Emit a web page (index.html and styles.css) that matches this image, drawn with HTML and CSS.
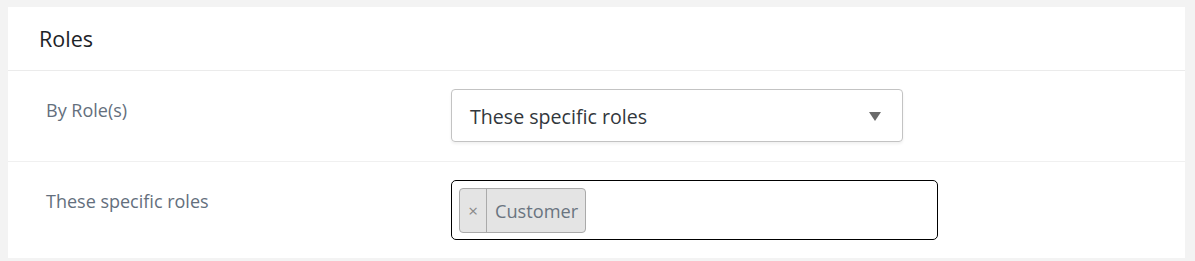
FILE: index.html
```html
<!DOCTYPE html>
<html>
<head>
<meta charset="utf-8">
<link rel="stylesheet" href="styles.css">
</head>
<body>
<div class="card">
  <div class="card-header">Roles</div>
  <div class="row row-select">
    <div class="label">By Role(s)</div>
    <div class="field">
      <div class="select">
        <span class="select-text">These specific roles</span>
        <span class="arrow"></span>
      </div>
    </div>
  </div>
  <div class="row row-multi">
    <div class="label">These specific roles</div>
    <div class="field">
      <div class="multi">
        <span class="tag"><span class="tag-x">×</span><span class="tag-text">Customer</span></span>
      </div>
    </div>
  </div>
</div>
</body>
</html>
```

FILE: styles.css
```css
html, body {
  margin: 0;
  padding: 0;
}
body {
  background: #f3f3f3;
  font-family: "Open Sans", "Noto Sans", sans-serif;
  padding: 7px 10px 3px 8px;
}
.card {
  background: #fff;
}
.card-header {
  height: 64px;
  box-sizing: border-box;
  padding: 0 0 0 31px;
  font-size: 21.5px;
  line-height: 63px;
  color: #1d2327;
  border-bottom: 1px solid #ebebeb;
}
.row {
  display: flex;
  box-sizing: border-box;
}
.row-select {
  height: 91px;
  border-bottom: 1px solid #f0f0f0;
  padding-top: 18px;
}
.row-multi {
  height: 96px;
  padding-top: 18px;
}
.label {
  width: 443px;
  box-sizing: border-box;
  padding-left: 38px;
  padding-top: 9px;
  font-size: 18px;
  color: #646f7d;
}
.select {
  width: 452px;
  height: 53px;
  box-sizing: border-box;
  border: 1px solid #c3c3c3;
  border-radius: 4px;
  box-shadow: 0 2px 3px rgba(0,0,0,0.06);
  display: flex;
  align-items: center;
  justify-content: space-between;
  padding: 0 21px 0 18px;
}
.select-text {
  font-size: 19.6px;
  color: #32373c;
  margin-top: 2px;
}
.arrow {
  width: 0;
  height: 0;
  border-left: 6px solid transparent;
  border-right: 6px solid transparent;
  border-top: 9px solid #6b6b6b;
  margin-top: 2px;
}
.multi {
  width: 487px;
  height: 60px;
  box-sizing: border-box;
  border: 1px solid #000;
  border-radius: 5px;
  padding: 7px 7px;
  display: flex;
  align-items: flex-start;
}
.tag {
  display: flex;
  align-items: stretch;
  height: 45px;
  box-sizing: border-box;
  background: #e4e4e4;
  border: 1px solid #aaa;
  border-radius: 4px;
}
.tag-x {
  width: 27px;
  box-sizing: border-box;
  border-right: 1px solid #aaa;
  display: flex;
  align-items: center;
  justify-content: center;
  color: #888;
  font-size: 17px;
}
.tag-text {
  display: flex;
  align-items: center;
  padding: 0 7px 0 8px;
  font-size: 18.2px;
  color: #6a7480;
}
```
